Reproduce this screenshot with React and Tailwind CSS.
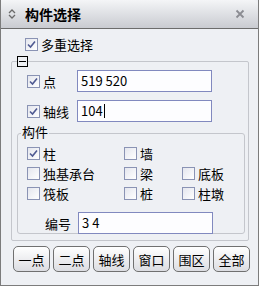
import React from "react";

const font = { fontFamily: '"Noto Sans CJK SC", "Liberation Sans", sans-serif' };

const Check = ({ checked }) => (
  <span className="w-[13px] h-[13px] border border-[#8a93b4] bg-gradient-to-br from-[#e4e6ee] to-[#ffffff] flex items-center justify-center shrink-0">
    {checked && (
      <svg width="9" height="9" viewBox="0 0 9 9">
        <path d="M1 4.5 L3.5 7 L8 1.5" fill="none" stroke="#4f5a92" strokeWidth="1.6" />
      </svg>
    )}
  </span>
);

const CheckItem = ({ checked, label, className = "" }) => (
  <div className={`flex items-center gap-[3px] ${className}`}>
    <Check checked={checked} />
    <span className="text-[13px] leading-none text-black">{label}</span>
  </div>
);

const Field = ({ value, caret }) => (
  <div className="w-[135px] h-[22px] border border-[#8189bf] bg-[#fdfdff] flex items-center px-[3px] text-[13px] text-black">
    {value}
    {caret && <span className="w-px h-[14px] bg-black ml-px" />}
  </div>
);

export default function App() {
  const buttons = ["一点", "二点", "轴线", "窗口", "围区", "全部"];
  return (
    <div style={font} className="w-[259px] h-[286px] bg-[#eef0f4] border-x border-b border-[#7c7c7c] flex flex-col overflow-hidden">
      <div className="h-[29px] shrink-0 rounded-tr-[5px] bg-gradient-to-b from-[#f4f5f7] to-[#c9cbd1] border-b border-[#6c6c6c] flex items-center px-[6px]">
        <svg width="8" height="10" viewBox="0 0 8 10" className="ml-[1px]">
          <path d="M1 4 L4 1 L7 4 M1 6 L4 9 L7 6" fill="none" stroke="#6b6b6b" strokeWidth="1.3" />
        </svg>
        <span className="ml-[9px] text-[14px] font-bold text-black leading-none">构件选择</span>
        <svg width="10" height="10" viewBox="0 0 10 10" className="ml-auto mr-[7px]">
          <path d="M1.5 1.5 L8.5 8.5 M8.5 1.5 L1.5 8.5" stroke="#8b8c92" strokeWidth="1.8" />
        </svg>
      </div>

      <div className="pl-[24px] pt-[9px]">
        <CheckItem checked label="多重选择" />
      </div>

      <div className="relative mt-[10px] ml-[10px] w-[238px] h-[180px] border border-[#c4c6cc] rounded-[2px]">
        <span className="absolute left-[5px] top-[-6px] w-[11px] h-[11px] border border-black bg-[#eef0f4] flex items-center justify-center">
          <span className="w-[7px] h-px bg-black" />
        </span>

        <div className="flex items-center mt-[8px] pl-[15px]">
          <CheckItem checked label="点" className="w-[50px]" />
          <Field value="519 520" />
        </div>
        <div className="flex items-center mt-[8px] pl-[15px]">
          <CheckItem checked label="轴线" className="w-[50px]" />
          <Field value="104" caret />
        </div>

        <div className="relative mt-[11px] ml-[5px] w-[228px] h-[101px] border border-[#c4c6cc] rounded-[3px]">
          <span className="absolute left-[3px] top-[-9px] px-[1px] bg-[#eef0f4] text-[13px] leading-none text-black">构件</span>
          <div className="grid grid-cols-[97px_58px_1fr] gap-y-[7px] pl-[9px] pt-[13px]">
            <CheckItem checked label="柱" />
            <CheckItem label="墙" />
            <span />
            <CheckItem label="独基承台" />
            <CheckItem label="梁" />
            <CheckItem label="底板" />
            <CheckItem label="筏板" />
            <CheckItem label="桩" />
            <CheckItem label="柱墩" />
          </div>
          <div className="flex items-center mt-[12px] pl-[27px]">
            <span className="w-[33px] text-[13px] leading-none text-black">编号</span>
            <Field value="3 4" />
          </div>
        </div>
      </div>

      <div className="flex gap-[3px] mt-[5px] ml-[12px]">
        {buttons.map((b) => (
          <button
            key={b}
            className="w-[37px] h-[26px] rounded-[5px] border border-[#707070] bg-gradient-to-b from-[#ffffff] to-[#dcdde2] text-[13px] leading-none text-black flex items-center justify-center"
          >
            {b}
          </button>
        ))}
      </div>
    </div>
  );
}
